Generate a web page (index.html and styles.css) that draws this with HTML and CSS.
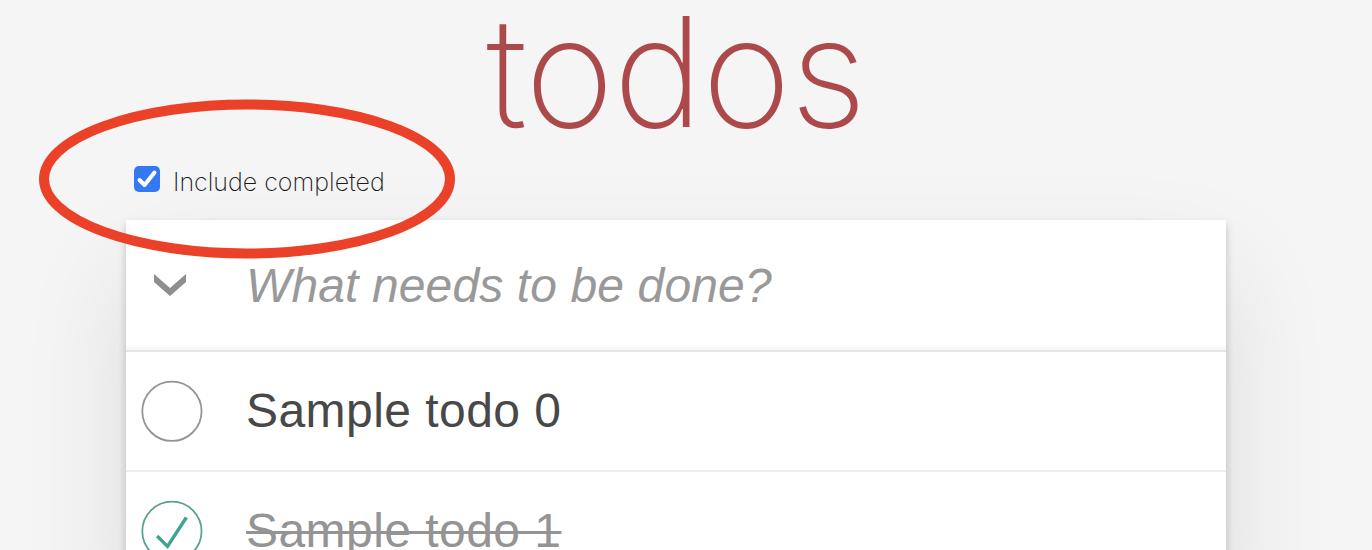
FILE: index.html
```html
<!DOCTYPE html>
<html lang="en">
<head>
<meta charset="utf-8">
<title>todos</title>
<link rel="stylesheet" href="styles.css">
</head>
<body>
<main class="app">
  <h1 class="title">todos</h1>
  <label class="filter">
    <span class="checkbox">
      <svg width="26" height="26" viewBox="0 0 26 26"><polyline points="5.5,14 10.5,19 20.5,6.5" fill="none" stroke="#fff" stroke-width="4" stroke-linecap="round" stroke-linejoin="round"/></svg>
    </span>
    <span class="filter-text">Include completed</span>
  </label>
  <section class="todoapp">
    <header class="header">
      <span class="toggle-all">
        <svg width="32" height="22" viewBox="0 0 32 22"><polygon points="0,0 16,14 32,0 32,8 16,22 0,8" fill="#8e8e8e"/></svg>
      </span>
      <input class="new-todo" type="text" placeholder="What needs to be done?">
    </header>
    <ul class="todo-list">
      <li class="todo">
        <span class="toggle">
          <svg width="80" height="80" viewBox="-10 -18 100 135"><circle cx="50" cy="50" r="50" fill="none" stroke="#949494" stroke-width="3"/></svg>
        </span>
        <span class="todo-label">Sample todo 0</span>
      </li>
      <li class="todo completed">
        <span class="toggle">
          <svg width="80" height="80" viewBox="-10 -18 100 135"><circle cx="50" cy="50" r="50" fill="none" stroke="#59A193" stroke-width="3"/><path fill="#3EA390" d="M72 25L42 71 27 56l-4 4 20 20 34-52z"/></svg>
        </span>
        <span class="todo-label">Sample todo 1</span>
      </li>
    </ul>
  </section>
</main>
<svg class="annotation" width="416" height="160" viewBox="0 0 416 160"><ellipse cx="208" cy="80" rx="203" ry="74.5" fill="none" stroke="#ea4128" stroke-width="10"/></svg>
</body>
</html>
```
FILE: styles.css
```css
html, body {
  margin: 0;
  background: #f5f5f5;
}
body {
  padding-right: 20px;
  font-family: "Liberation Sans", Arial, sans-serif;
  color: #222;
  overflow: hidden;
}
.app {
  width: 1100px;
  margin: 0 auto;
}
.title {
  margin: 0;
  height: 140px;
  padding-top: 2px;
  box-sizing: border-box;
  line-height: 140px;
  font-family: "Inter", sans-serif;
  font-weight: 200;
  font-size: 152px;
  letter-spacing: -1px;
  text-align: center;
  color: #ac4a4b;
}
.filter {
  display: flex;
  align-items: center;
  height: 80px;
  padding-left: 8px;
  box-sizing: border-box;
  padding-bottom: 2px;
}
.checkbox {
  display: block;
  width: 26px;
  height: 26px;
  border-radius: 5px;
  background: #3478f6;
}
.checkbox svg {
  display: block;
}
.filter-text {
  margin-left: 13px;
  padding-top: 6px;
  font-family: "Inter", sans-serif;
  font-weight: 200;
  font-size: 25px;
  color: #1a1a1a;
}
.todoapp {
  background: #fff;
  box-shadow: 0 4px 8px rgba(0, 0, 0, 0.2), 0 50px 100px rgba(0, 0, 0, 0.1);
}
.header {
  display: flex;
  align-items: center;
  height: 130px;
  box-shadow: inset 0 -4px 2px rgba(0, 0, 0, 0.03);
}
.toggle-all {
  width: 120px;
  box-sizing: border-box;
  padding-left: 28px;
  flex: none;
}
.toggle-all svg {
  display: block;
}
.new-todo {
  flex: 1;
  height: 130px;
  margin: 0;
  padding: 0 32px 0 0;
  border: 0;
  background: transparent;
  font-family: "Liberation Sans", Arial, sans-serif;
  font-size: 48px;
  letter-spacing: 0.12px;
  color: #4d4d4d;
  outline: none;
}
.new-todo::placeholder {
  font-style: italic;
  color: #999;
}
.todo-list {
  margin: 0;
  padding: 0;
  list-style: none;
  border-top: 2px solid #e6e6e6;
}
.todo {
  display: flex;
  align-items: center;
  height: 118px;
  border-bottom: 2px solid #ededed;
}
.toggle {
  width: 120px;
  flex: none;
}
.toggle svg {
  display: block;
}
.todo-label {
  font-size: 48px;
  line-height: 1.2;
  letter-spacing: 0.45px;
  color: #484848;
}
.completed .todo-label {
  color: #949494;
  text-decoration: line-through;
  text-decoration-thickness: 3px;
}
.annotation {
  position: absolute;
  left: 39px;
  top: 99px;
}
```
